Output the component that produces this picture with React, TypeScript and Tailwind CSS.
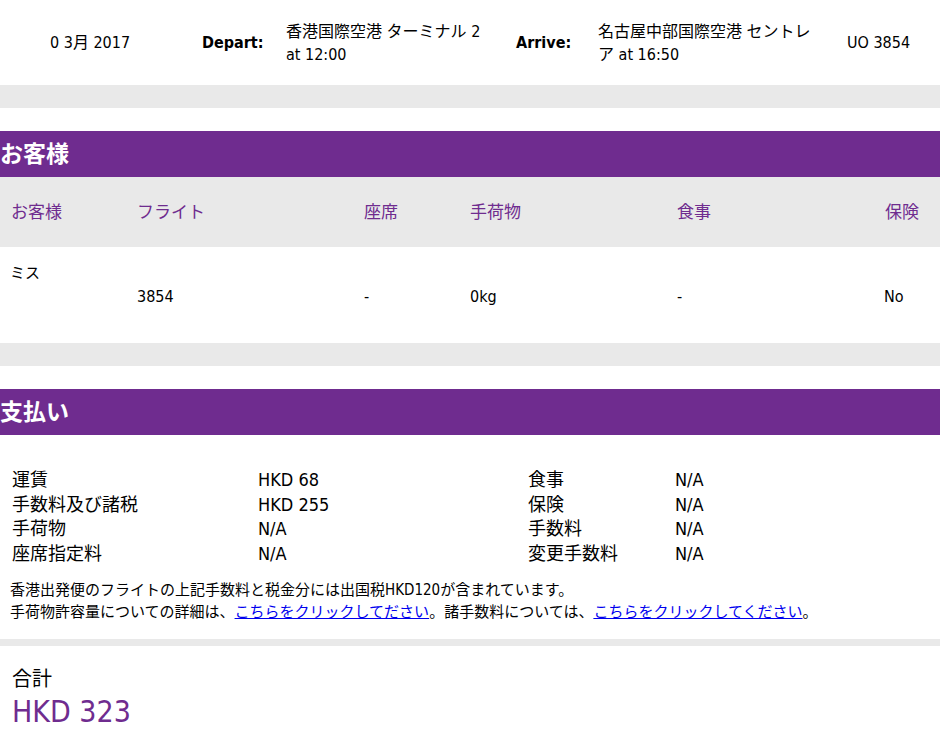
export default function App() {
  const font = { fontFamily: '"DejaVu Sans Condensed","Noto Sans","Noto Sans CJK JP",sans-serif' };
  const purple = "text-[#6f2c8f]";
  return (
    <div className="w-[940px] bg-white text-black" style={font}>
      <div className="h-[85px] flex items-center text-[16px] leading-[23px]">
        <div className="w-[202px] pl-[50px]">0 3月 2017</div>
        <div className="w-[84px] font-bold">Depart:</div>
        <div className="w-[230px]">香港国際空港 ターミナル 2<br />at 12:00</div>
        <div className="w-[82px] font-bold">Arrive:</div>
        <div className="w-[249px]">名古屋中部国際空港 セントレ<br />ア at 16:50</div>
        <div>UO 3854</div>
      </div>
      <div className="h-[23px] bg-[#e9e9e9]" />
      <div className="h-[23px]" />
      <div className="h-[46px] bg-[#6f2c8f] text-white text-[23px] font-bold flex items-center">お客様</div>
      <div className={`h-[70px] bg-[#e9e9e9] flex items-center pt-[2px] text-[17px] ${purple}`}>
        <div className="w-[137px] pl-[11px]">お客様</div>
        <div className="w-[227px]">フライト</div>
        <div className="w-[106px]">座席</div>
        <div className="w-[207px]">手荷物</div>
        <div className="w-[208px]">食事</div>
        <div>保険</div>
      </div>
      <div className="h-[96px] text-[16px] relative">
        <div className="pl-[10px] pt-[15px] text-[15px]">ミス</div>
        <div className="flex">
          <div className="w-[137px]" />
          <div className="w-[227px]">3854</div>
          <div className="w-[106px]">-</div>
          <div className="w-[207px]">0kg</div>
          <div className="w-[207px]">-</div>
          <div>No</div>
        </div>
      </div>
      <div className="h-[23px] bg-[#e9e9e9]" />
      <div className="h-[23px]" />
      <div className="h-[46px] bg-[#6f2c8f] text-white text-[23px] font-bold flex items-center">支払い</div>
      <div className="pt-[33px] pl-[12px] text-[18px] leading-[24.5px]">
        {[
          ["運賃", "HKD 68", "食事", "N/A"],
          ["手数料及び諸税", "HKD 255", "保険", "N/A"],
          ["手荷物", "N/A", "手数料", "N/A"],
          ["座席指定料", "N/A", "変更手数料", "N/A"],
        ].map((r, i) => (
          <div key={i} className="flex">
            <div className="w-[246px]">{r[0]}</div>
            <div className="w-[270px]">{r[1]}</div>
            <div className="w-[147px]">{r[2]}</div>
            <div>{r[3]}</div>
          </div>
        ))}
      </div>
      <div className="pl-[10px] pt-[13px] pb-[16px] text-[15px] leading-[22px]">
        <div>香港出発便のフライトの上記手数料と税金分には出国税HKD120が含まれています。</div>
        <div>
          手荷物許容量についての詳細は、<a className="text-[#0000ee] underline">こちらをクリックしてださい</a>。諸手数料については、<a className="text-[#0000ee] underline">こちらをクリックしてください</a>。
        </div>
      </div>
      <div className="h-[7px] bg-[#e9e9e9]" />
      <div className="pl-[12px] pt-[20px]">
        <div className="text-[20px] leading-[26px]">合計</div>
        <div className={`text-[30px] leading-[40px] ${purple}`}>HKD 323</div>
      </div>
    </div>
  );
}
